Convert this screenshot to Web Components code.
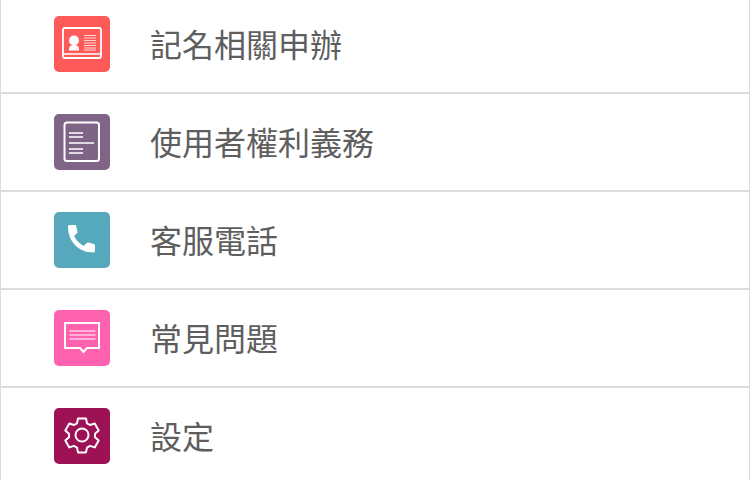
<!DOCTYPE html>
<html lang="zh-Hant">
<head>
<meta charset="utf-8">
<title>選單</title>
<style>
html, body { margin: 0; height: 480px; overflow: hidden; background: #fff; }
</style>
</head>
<body>
<menu-list>
    <menu-row color="#ff5a5a" label="記名相關申辦">
        <svg viewBox="0 0 56 56" fill="none" stroke="#fff">
            <path d="M9 14a2 2 0 0 1 2-2h34a2 2 0 0 1 2 2v26a2 2 0 0 1-2 2H11a2 2 0 0 1-2-2z" stroke-width="1.800"/>
            <path d="M9 38h38" stroke-width="1.600"/>
            <circle cx="20" cy="24.500" r="5" fill="#fff" stroke="none"/>
            <path d="M15 34.500v-1.500c0-2.800 2-4 5-4s5 1.200 5 4v1.500z" fill="#fff" stroke="none"/>
            <path d="M30 19.500h12M30 22h12M30 24.500h12M30 27h12M30 29.500h12M30 32h12M30 34h12" stroke-width="1" opacity=".75"/>
        </svg>
    </menu-row>
    <menu-row color="#806485" label="使用者權利義務">
        <svg viewBox="0 0 56 56" fill="none" stroke="#fff">
            <rect x="10.500" y="8.500" width="34.500" height="38.500" rx="2.500" stroke-width="2"/>
            <path d="M15 19h14M15 23h14M15 29h25M15 35h14M15 39h14" stroke-width="1.700"/>
        </svg>
    </menu-row>
    <menu-row color="#56a8bc" label="客服電話">
        <svg viewBox="0 0 56 56" fill="#fff">
            <path d="M14 14.500c0-.8.700-1.500 1.500-1.500h5.200c.8 0 1.300.5 1.500 1.200l1.300 5.300c.2.7 0 1.300-.5 1.800l-2.900 2.700c2 4.300 5.400 7.800 9.700 10l2.800-2.900c.5-.5 1.200-.7 1.900-.5l5.200 1.300c.7.200 1.300.7 1.300 1.500v5.600c0 .8-.7 1.500-1.500 1.500C24.600 40.500 14 29.400 14 14.500z"/>
        </svg>
    </menu-row>
    <menu-row color="#ff62ae" label="常見問題">
        <svg viewBox="0 0 56 56" fill="none" stroke="#fff">
            <path d="M11 13h34v25H33l-3.500 4-3.500-4H11z" stroke-width="2"/>
            <path d="M15.500 21h26M15.500 25h26M15.500 29h26" stroke-width="1.200"/>
        </svg>
    </menu-row>
    <menu-row color="#9c1255" label="設定">
        <svg viewBox="0 0 56 56" fill="none" stroke="#fff" stroke-width="2" stroke-linejoin="round">
            <circle cx="28" cy="27" r="6.500"/>
            <path d="M24 10.500h8l1 4.800 3 1.700 4.700-1.500 4 6.900-3.700 3.300v3.500l3.700 3.300-4 6.900-4.700-1.500-3 1.700-1 4.800h-8l-1-4.800-3-1.700-4.700 1.500-4-6.900 3.700-3.300v-3.500l-3.700-3.300 4-6.900 4.700 1.500 3-1.700z"/>
        </svg>
    </menu-row>
</menu-list>

<script>
class MenuList extends HTMLElement {
    constructor() {
        super();
        this.attachShadow({ mode: 'open' });
    }

    connectedCallback() {
        this.shadowRoot.innerHTML = `
            <style>
                :host {
                    display: flex;
                    flex-direction: column;
                    margin-top: -4px;
                    border-left: 1px solid #dcdcdc;
                    border-right: 1px solid #dcdcdc;
                    font-family: "Liberation Sans", "Noto Sans CJK TC", sans-serif;
                }
            </style>
            <slot></slot>
        `;
    }
}
customElements.define('menu-list', MenuList);

class MenuRow extends HTMLElement {
    constructor() {
        super();
        this.attachShadow({ mode: 'open' });
    }

    connectedCallback() {
        const color = this.getAttribute('color');
        const label = this.getAttribute('label');

        this.shadowRoot.innerHTML = `
            <style>
                :host {
                    display: flex;
                    align-items: center;
                    gap: 40px;
                    height: 96px;
                    padding-left: 53px;
                    border-bottom: 2px solid #dcdcdc;
                }
                .icon {
                    display: flex;
                    flex: none;
                    width: 56px;
                    height: 56px;
                    border-radius: 5px;
                    background-color: ${color};
                }
                ::slotted(svg) {
                    width: 56px;
                    height: 56px;
                }
                .label {
                    font-size: 32px;
                    color: #5e5e5e;
                    margin-top: -2px;
                }
            </style>
            <div class="icon"><slot></slot></div>
            <div class="label">${label}</div>
        `;
    }
}
customElements.define('menu-row', MenuRow);
</script>
</body>
</html>
